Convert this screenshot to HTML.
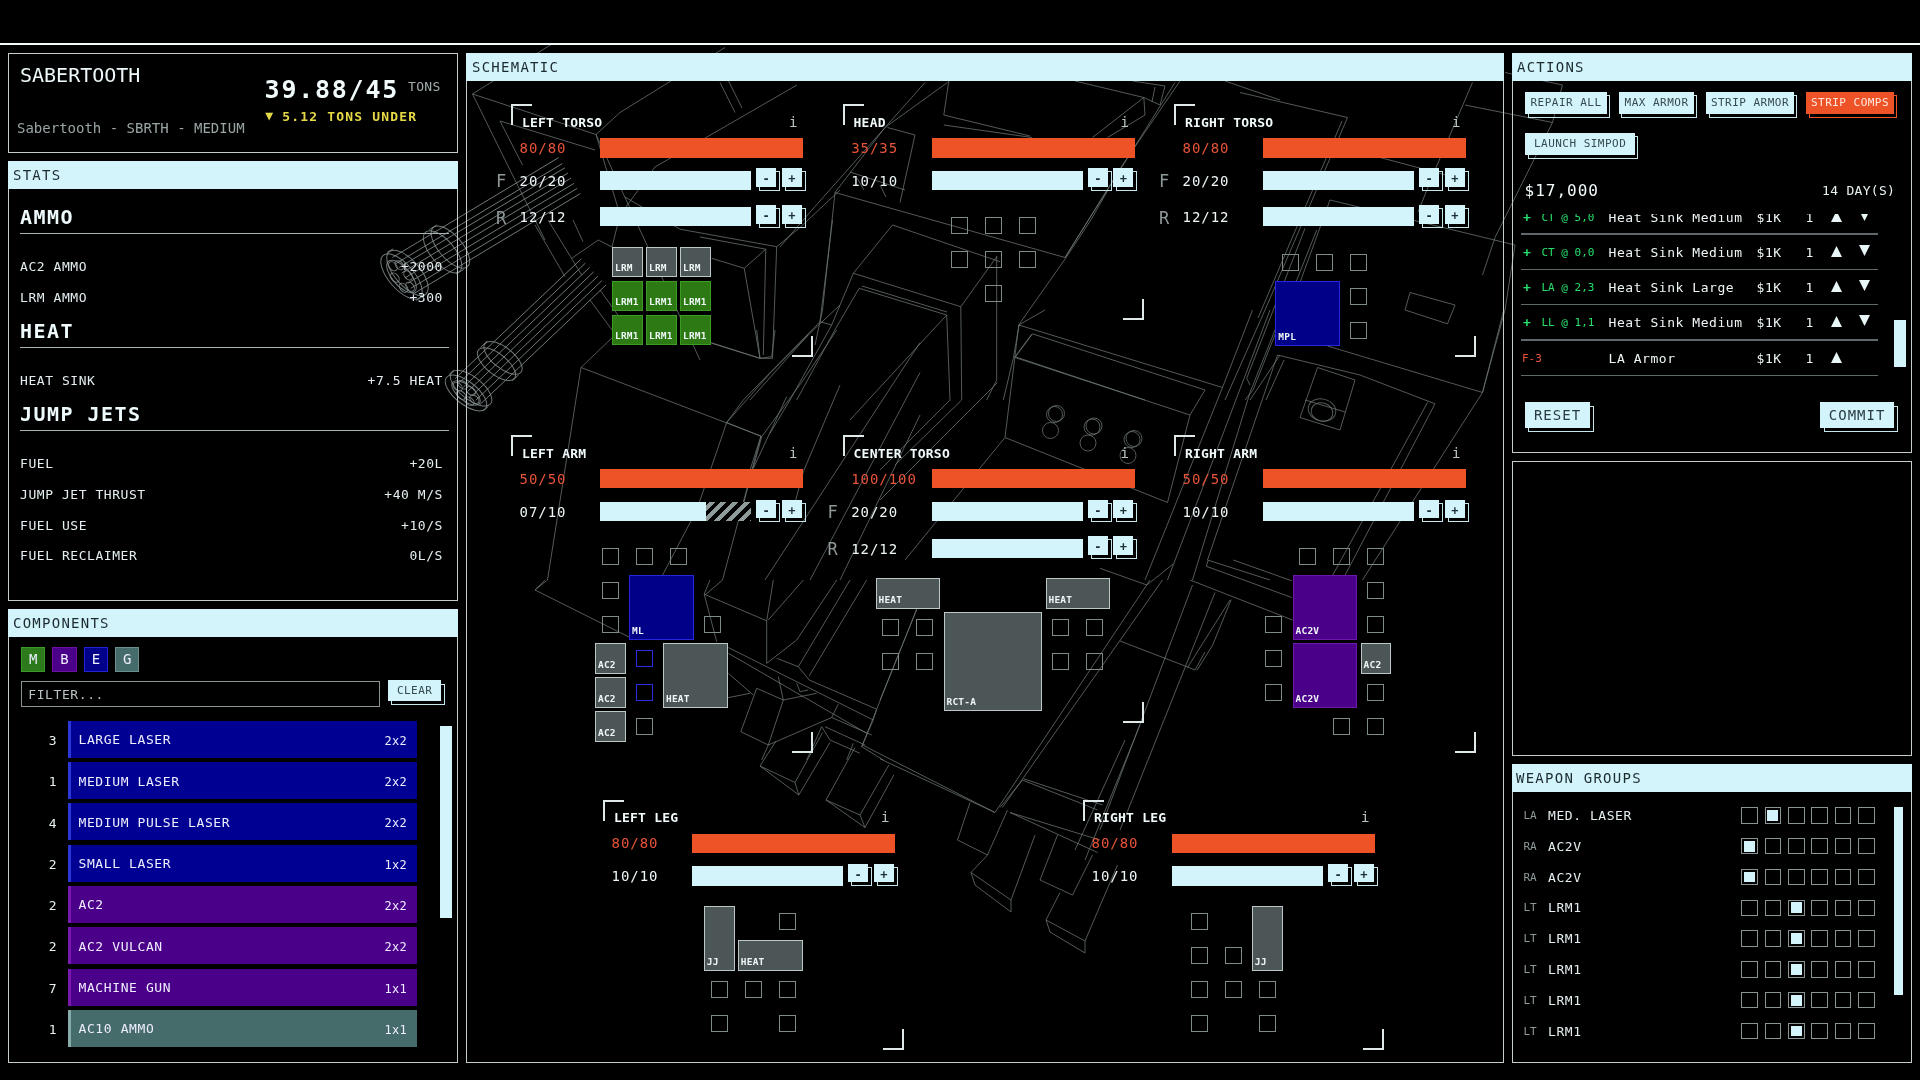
<!DOCTYPE html><html><head><meta charset="utf-8"><title>Sabertooth</title><style>
*{box-sizing:border-box;margin:0;padding:0}
html,body{width:1920px;height:1080px;background:#000;overflow:hidden}
body{position:relative;will-change:transform;font-family:"DejaVu Sans Mono","Liberation Mono",monospace;color:#e8f4f6;font-size:13px}
.a{position:absolute;white-space:pre;line-height:1}
.pn{position:absolute;border:1px solid #c4cccd}
.hd{position:absolute;background:#d2f4fa;color:#1c2b30;font-size:14px;letter-spacing:1.25px;height:28px;line-height:28px;white-space:pre}
.h2{position:absolute;font-weight:bold;font-size:20px;letter-spacing:1.45px;white-space:pre;line-height:1;color:#eefafc}
.ul{position:absolute;height:1px;background:#aab4b6}
.st{position:absolute;font-size:13px;letter-spacing:.55px;white-space:pre;line-height:1;color:#e4eef0}
.r{text-align:right}
.btn{position:absolute;background:#d2f4fa;color:#364a50;font-size:11px;letter-spacing:.48px;text-align:center;white-space:pre}
.btn.red{background:#ee5327;color:#ffe9df}
.sh{position:absolute;border:1.5px solid #c4e6ec}
.bar{position:absolute;height:19.2px}
.cy{background:#d2f4fa}
.rd{background:#ee5327}
.br{position:absolute;width:21px;height:21px}
.tl{border-left:2px solid #dfe9ea;border-top:2px solid #dfe9ea}
.brc{border-right:2px solid #dfe9ea;border-bottom:2px solid #dfe9ea}
.ti{position:absolute;font-weight:bold;font-size:13px;letter-spacing:.2px;white-space:pre;line-height:1;color:#f2fbfc}
.hp{position:absolute;font-size:14px;letter-spacing:.95px;white-space:pre;line-height:1}
.fr{position:absolute;font-size:17px;color:#8f9899;line-height:1}
.e{position:absolute;width:17px;height:17px;border:1.7px solid #7f8a8b}
.eb{border-color:#2a2ee0}
.it{position:absolute;font-size:9.5px;font-weight:bold;letter-spacing:.2px;line-height:1;color:#eef6f6;white-space:pre}
.it span{position:absolute;left:2px;bottom:3.5px}
.g{background:#4d5657;border:1.7px solid #bcc7c7}
.gr{background:#2d7a15;border:1.5px solid #3c9c24}
.bl{background:#000088;border:1.5px solid #2626dc}
.pu{background:#4b0089;border:1.5px solid #6d18ac}
.row{position:absolute;left:68px;width:349px;height:37px;border-left:3px solid}
.row .n{position:absolute;left:7.5px;top:12.5px;font-size:13px;letter-spacing:.6px;line-height:1;white-space:pre;color:#eef}
.row .z{position:absolute;right:10px;top:14px;font-size:12px;letter-spacing:.3px;line-height:1;color:#eef}
.cnt{position:absolute;width:20px;text-align:center;font-size:13px;line-height:1;color:#e8f0f0}
.cb{position:absolute;width:16.5px;height:16.5px;border:1.6px solid #899495}
.cb.on::after{content:"";position:absolute;left:1.9px;top:1.9px;right:1.9px;bottom:1.9px;background:#d2f4fa}
.sep{position:absolute;left:1521px;width:357px;height:1px;background:#5a6263}
.gn{color:#27e06c}
</style></head><body>
<svg class="a" style="left:0;top:0" width="1920" height="1080" viewBox="0 0 1920 1080" fill="none" stroke-width="1"><g stroke="#6f7777" stroke-opacity=".75"><path d="M563 37L472.5 94L596 134.5L620 215L612 247M472.5 94L510 170L545 240M500 121L595 150M500 121L522.5 165M725 47.5L620 112.5L596 134.5M797 85L655 167L620 215M720 82.5L735 112.5M728 80L742 108M596 134.5L640 230L700 360M571.7 258.3L598.3 240L612 247M535 225L565 276.7M548 220L581.7 275M573 220L583 241.7M590 300L612 330L640 322M600 290L625 325M948.8 81L943.8 115L1030 136M943.8 125L1032 137.5M1075 81L1143.8 97.5L1092.5 137.5M1143.8 97.5L1145 115L1107.5 137.5M1132.5 81L1165 86L1160 105L1143.8 97.5M1155 87L1152 102M835 192.5L1065 257.5L1175 82.5M1108 190L1090.8 220M925 82.5L807.5 215L780 247M947.5 82.5L885 127.5L835 192.5L822.5 310L815 345M887.5 127.5L915 135L900 202.5M850 172L905 190M857 178L864 190M880 185L886 197M1225 81L1280 100M1180 81L1122.5 165L1065 257.5M1240 92.5L1347.5 117.5L1265 310L1225 400M1342 121L1258 318M1472.5 82.5L1435 170L1418 212M1465 105L1552.5 122.5L1495 237.5L1482.5 275M1505 72.5L1562.5 85L1552.5 122.5M1330 200L1515 245L1505 310L1482.5 392.5M1330 200L1290 310M1380 157.5L1465 180M1410 292.5L1455 305L1447.5 323.8L1405 310L1410 292.5M615 335L581 367.5L761 436L750 470M581 367.5L547.5 580L535 590M761 436L722.5 580L705 595M920 342.5L765 580M920 372.5L810 580M920 415L840 580M1045 310L1018.8 325L1222.5 387.5M1018.8 325L1005 437.5L1167.5 502.5L1190 415L1205 390L1032.5 333.8L1015 357.5L1190 415M997.5 382.5L880 500M1005 437.5L905 560M1252.5 310L1222.5 387.5L1145 580M1270 310L1187.5 527.5L1167.5 580M1280 317.5L1250 392.5L1192.5 580M1277.5 355L1360 375L1435 403.8L1342.5 580M1277.5 355L1207.5 560L1270 580M1427.5 402.5L1330 580M1317.5 367.5L1355 380L1340 430L1300 417.5L1317.5 367.5M1305 400L1345 412M1327.5 346L1482.5 392.5L1503.8 310M1482.5 392.5L1362.5 580M760 766L798.8 795L830 742.5M760 766L776 741M760 766L795 782.5L798.8 795M795 782.5L822.5 732.5M826 800L865 827.5L893.8 775M826 800L855 747.5M826 800L860 815L865 827.5M860 815L888.8 765M1150 580L995 812.5M1162.5 580L1002.5 807.5M1192.5 585L1100 830M1215 592.5L1120 830M1230 600L1187.5 667.5M1120 641L1182.5 665L1195 670L1205 652M1023.8 778.8L1102.5 805M880 758.8L995 812.5M1010 812.5L1100 840M917.5 607.5L880 700M1190 580L1292.5 620M970 802.5L957.5 840L987.5 855L1007.5 810M987.5 855L971 872.5L1011 900L1035 835M971 872.5L975 885L1011 912L1011 900M1057.5 835L1040 880L1072.5 895L1092.5 855M1060 892.5L1046 920L1085 941L1117.5 865M1046 920L1050 932L1085 953L1085 941M1010 812.5L1097.5 852.5M1022.5 780L1097.5 810M1022.5 780L1000 807.5M1140 725L1085 860M1125 740L1075 850M625 197L680 229.2L776.7 246.7L800 227.5L840 190M776.7 246.7L772.5 358.3L760 358.3M765.8 249.2L763.3 355M711.7 258.3L744.2 268.3L765.8 249.2M744.2 268.3L760 358.3L710.8 342.5M700 237L765.8 249.2M832.5 220L820 321.7L831.7 325M820 321.7L743.3 400L726.7 422.5M808 335L750 400M853.3 273.3L831.7 325L790 400L770 433.3M859.2 288.3L836.7 326.7L796.7 400M892.5 225L853.3 273.3L960.8 306.7L996.7 256.7M892.5 225L1000 261.7M960.8 306.7L961.7 400L895 465M996.7 255.8L996.7 380L986.7 400M859.2 288.3L946.7 315L950 400L880 470M946.7 315L868.3 400L850 420M862 286L947 312M726.7 422.5L761.7 436.7M726.7 422.5L696.7 510L660 580L640 640M726.7 422.5L770 373.3L813.3 330L840 305M836.7 330L803.3 380L761.7 436.7L741.7 510M786.7 396.7L753.3 468.3M840 385L803.3 471.7L793 510M711.7 343.3L760 358.3L771.7 356.7L775 330M760 358.3L756.7 330M1090.8 220L1065.8 258L1019.2 324.2L1013.3 358.3L1003.3 400M1031.7 334.2L1015 356.7L1145 400M1305 228.3L1246.7 378.3L1250 385M1316.7 230L1253 390L1245 400M1280 355L1250 400M1284 360L1266 400M545 580L535 590L629 637M710 580L704.2 594.2L766.7 620.8L766.7 663.3M766.7 620.8L773.3 580M768.3 620L803.3 580M704.2 594.2L716.7 641.7M766.7 663.3L796.7 640L836.7 580M798.3 666.7L850 580M809.2 675.8L866.7 580M776.7 658.3L798.3 666.7L809.2 680L876.7 709.2L873.3 720L861.7 746.7L883.3 760M728.3 647.5L873.3 720M728.3 653.3L866.7 733.3M916.7 609.2L861.7 746.7M756.7 688.3L740.8 731.7L768.3 745L783.3 700L756.7 688.3M778.3 676.7L783.3 700L816.7 693.3M768.3 745L831.7 717.5L838.3 704.2M796.7 683.3L800 691.7L808.3 690M831.7 717.5L871.7 735M825 726.7L865 745M821.7 726.7L830 740L860 753.3M768.3 745L761.7 760M821.7 726.7L806.7 760M853.3 743.3L846.7 760M728.3 673.3L753.3 695M700 703.3L750 693.3M862.5 745L995 812.5M1208.3 560L1206.3 566.3L1291.7 597.5M1233.3 560L1291.7 580.8M1100 568.3L1146.9 585L1172.9 564.2M1231.2 599.6L1212.5 645.4L1196.9 670.4"/><ellipse cx="1322" cy="412" rx="11" ry="9" transform="rotate(15 1322 412)"/><ellipse cx="1322" cy="410" rx="14" ry="11" transform="rotate(15 1322 410)"/><ellipse cx="1054.5" cy="414.5" rx="8" ry="8" transform="rotate(0 1054.5 414.5)"/><ellipse cx="1050.5" cy="430.5" rx="8" ry="8" transform="rotate(0 1050.5 430.5)"/><ellipse cx="1056.5" cy="413.5" rx="8" ry="8" transform="rotate(0 1056.5 413.5)"/><ellipse cx="1092" cy="427" rx="8" ry="8" transform="rotate(0 1092 427)"/><ellipse cx="1088" cy="443" rx="8" ry="8" transform="rotate(0 1088 443)"/><ellipse cx="1094" cy="426" rx="8" ry="8" transform="rotate(0 1094 426)"/><ellipse cx="1132" cy="439.5" rx="8" ry="8" transform="rotate(0 1132 439.5)"/><ellipse cx="1128" cy="455.5" rx="8" ry="8" transform="rotate(0 1128 455.5)"/><ellipse cx="1134" cy="438.5" rx="8" ry="8" transform="rotate(0 1134 438.5)"/></g><g stroke="#8c9696" stroke-opacity=".8"><path d="M392.4 257.5L558.7 157.6M396 263.5L562.3 163.6M398.6 267.8L564.9 167.8M401.7 272.9L568 173M404.8 278L571 178.1M407.8 283.2L574.1 183.3M410.9 288.3L577.2 188.4M414 293.5L580.3 193.6M387.1 252.5L393.1 248.9M415.9 300.5L421.9 296.9M429.3 229.5L437 224.9M456 274.1L463.7 269.4M455.1 378.6L581.3 258.8M459.2 382.9L585.4 263.1M463.3 387.3L589.5 267.5M467.5 391.6L593.7 271.8M471.6 396L597.8 276.2M475.7 400.3L601.9 280.6M479.8 404.7L606.1 284.9M448.8 374.9L453.9 370M483.2 411.1L488.3 406.3M480.6 347.4L487.2 341.2M512.3 380.8L518.8 374.6"/><ellipse cx="401.5" cy="276.5" rx="28" ry="12.6" transform="rotate(49 401.5 276.5)"/><ellipse cx="407.5" cy="272.9" rx="28" ry="12.6" transform="rotate(49 407.5 272.9)"/><ellipse cx="401.5" cy="276.5" rx="20" ry="9" transform="rotate(49 401.5 276.5)"/><ellipse cx="410.1" cy="286.7" rx="5.2" ry="3.5" transform="rotate(49 410.1 286.7)"/><ellipse cx="408.1" cy="275.4" rx="5.2" ry="3.5" transform="rotate(49 408.1 275.4)"/><ellipse cx="399.4" cy="265.2" rx="5.2" ry="3.5" transform="rotate(49 399.4 265.2)"/><ellipse cx="392.9" cy="266.3" rx="5.2" ry="3.5" transform="rotate(49 392.9 266.3)"/><ellipse cx="394.9" cy="277.6" rx="5.2" ry="3.5" transform="rotate(49 394.9 277.6)"/><ellipse cx="403.6" cy="287.8" rx="5.2" ry="3.5" transform="rotate(49 403.6 287.8)"/><ellipse cx="442.6" cy="251.8" rx="26" ry="11.7" transform="rotate(49 442.6 251.8)"/><ellipse cx="450.4" cy="247.1" rx="26" ry="11.7" transform="rotate(49 450.4 247.1)"/><ellipse cx="466" cy="393" rx="25" ry="11.2" transform="rotate(38.5 466 393)"/><ellipse cx="471.1" cy="388.2" rx="25" ry="11.2" transform="rotate(38.5 471.1 388.2)"/><ellipse cx="466" cy="393" rx="17" ry="7.7" transform="rotate(38.5 466 393)"/><ellipse cx="474.3" cy="399.3" rx="5.2" ry="3.5" transform="rotate(38.5 474.3 399.3)"/><ellipse cx="470.9" cy="391" rx="5.2" ry="3.5" transform="rotate(38.5 470.9 391)"/><ellipse cx="462.5" cy="384.7" rx="5.2" ry="3.5" transform="rotate(38.5 462.5 384.7)"/><ellipse cx="457.7" cy="386.7" rx="5.2" ry="3.5" transform="rotate(38.5 457.7 386.7)"/><ellipse cx="461.1" cy="395" rx="5.2" ry="3.5" transform="rotate(38.5 461.1 395)"/><ellipse cx="469.5" cy="401.3" rx="5.2" ry="3.5" transform="rotate(38.5 469.5 401.3)"/><ellipse cx="496.5" cy="364.1" rx="23" ry="10.3" transform="rotate(38.5 496.5 364.1)"/><ellipse cx="503" cy="357.9" rx="23" ry="10.3" transform="rotate(38.5 503 357.9)"/></g></svg>
<div class="a" style="left:0;top:0;width:1920px;height:43px;background:#000"></div>
<div class="a" style="left:0;top:43px;width:1920px;height:2px;background:#f4fbfc"></div>
<div class="pn" style="left:8px;top:53px;width:450px;height:100px"></div>
<div class="a" style="left:20px;top:65px;font-size:20px;letter-spacing:0px;color:#eef9fb">SABERTOOTH</div>
<div class="a" style="left:17px;top:121px;font-size:14px;color:#9aa5a6">Sabertooth - SBRTH - MEDIUM</div>
<div class="a" style="left:264.6px;top:77.2px;font-size:25px;font-weight:bold;letter-spacing:1.75px;color:#f2fbfc">39.88/45</div>
<div class="a" style="left:408px;top:80px;font-size:13px;letter-spacing:.3px;color:#a3adae">TONS</div>
<div class="a" style="left:265.3px;top:109.8px;font-size:13px;font-weight:bold;letter-spacing:1.18px;color:#e6d946"><span style="font-size:13px;position:relative;top:-1px;letter-spacing:0">▼</span> 5.12 TONS UNDER</div>
<div class="pn" style="left:8px;top:161px;width:450px;height:440px"></div>
<div class="hd" style="left:8px;top:161px;width:450px;padding-left:5px">STATS</div>
<div class="h2" style="left:20px;top:207px">AMMO</div>
<div class="ul" style="left:20px;top:233px;width:429px"></div>
<div class="st" style="left:20px;top:259.5px">AC2 AMMO</div>
<div class="st r" style="right:1477px;top:259.5px">+2000</div>
<div class="st" style="left:20px;top:290.5px">LRM AMMO</div>
<div class="st r" style="right:1477px;top:290.5px">+300</div>
<div class="h2" style="left:20px;top:321px">HEAT</div>
<div class="ul" style="left:20px;top:347px;width:429px"></div>
<div class="st" style="left:20px;top:373.5px">HEAT SINK</div>
<div class="st r" style="right:1477px;top:373.5px">+7.5 HEAT</div>
<div class="h2" style="left:20px;top:404px">JUMP JETS</div>
<div class="ul" style="left:20px;top:430px;width:429px"></div>
<div class="st" style="left:20px;top:457px">FUEL</div>
<div class="st r" style="right:1477px;top:457px">+20L</div>
<div class="st" style="left:20px;top:488px">JUMP JET THRUST</div>
<div class="st r" style="right:1477px;top:488px">+40 M/S</div>
<div class="st" style="left:20px;top:518.5px">FUEL USE</div>
<div class="st r" style="right:1477px;top:518.5px">+10/S</div>
<div class="st" style="left:20px;top:549px">FUEL RECLAIMER</div>
<div class="st r" style="right:1477px;top:549px">0L/S</div>
<div class="pn" style="left:8px;top:609px;width:450px;height:454px"></div>
<div class="hd" style="left:8px;top:609px;width:450px;padding-left:5px">COMPONENTS</div>
<div class="a" style="left:21px;top:647.2px;width:24.2px;height:24.4px;background:#2c7a1c;border:1.5px solid #3a9a27;text-align:center;line-height:23.5px;font-size:14px;color:#eef">M</div>
<div class="a" style="left:52.4px;top:647.2px;width:24.2px;height:24.4px;background:#4b0089;border:1.5px solid #6c11a6;text-align:center;line-height:23.5px;font-size:14px;color:#eef">B</div>
<div class="a" style="left:83.8px;top:647.2px;width:24.2px;height:24.4px;background:#000088;border:1.5px solid #2323d8;text-align:center;line-height:23.5px;font-size:14px;color:#eef">E</div>
<div class="a" style="left:115.2px;top:647.2px;width:24.2px;height:24.4px;background:#456b6b;border:1.5px solid #6b8f8f;text-align:center;line-height:23.5px;font-size:14px;color:#eef">G</div>
<div class="a" style="left:21px;top:681px;width:359px;height:26px;border:1px solid #8a9495;padding-left:6.3px;line-height:25px;font-size:13px;letter-spacing:.58px;color:#b9c3c4">FILTER...</div>
<div class="sh" style="left:391px;top:683.5px;width:53.9px;height:21.9px"></div>
<div class="btn" style="left:388px;top:680px;width:53.3px;height:21.3px;line-height:21.3px;">CLEAR</div>
<div class="cnt" style="left:42.7px;top:733.9px">3</div>
<div class="row" style="top:720.7px;background:#000092;border-color:#2a38d8"><div class="n">LARGE LASER</div><div class="z">2x2</div></div>
<div class="cnt" style="left:42.7px;top:775.2px">1</div>
<div class="row" style="top:762px;background:#000092;border-color:#2a38d8"><div class="n">MEDIUM LASER</div><div class="z">2x2</div></div>
<div class="cnt" style="left:42.7px;top:816.5px">4</div>
<div class="row" style="top:803.3px;background:#000092;border-color:#2a38d8"><div class="n">MEDIUM PULSE LASER</div><div class="z">2x2</div></div>
<div class="cnt" style="left:42.7px;top:857.8px">2</div>
<div class="row" style="top:844.6px;background:#000092;border-color:#2a38d8"><div class="n">SMALL LASER</div><div class="z">1x2</div></div>
<div class="cnt" style="left:42.7px;top:899.1px">2</div>
<div class="row" style="top:885.9px;background:#4b0089;border-color:#7a19b0"><div class="n">AC2</div><div class="z">2x2</div></div>
<div class="cnt" style="left:42.7px;top:940.4px">2</div>
<div class="row" style="top:927.2px;background:#4b0089;border-color:#7a19b0"><div class="n">AC2 VULCAN</div><div class="z">2x2</div></div>
<div class="cnt" style="left:42.7px;top:981.7px">7</div>
<div class="row" style="top:968.5px;background:#4b0089;border-color:#7a19b0"><div class="n">MACHINE GUN</div><div class="z">1x1</div></div>
<div class="cnt" style="left:42.7px;top:1023px">1</div>
<div class="row" style="top:1009.8px;background:#456b6b;border-color:#86abab"><div class="n">AC10 AMMO</div><div class="z">1x1</div></div>
<div class="a cy" style="left:440px;top:726px;width:12px;height:192px"></div>
<div class="pn" style="left:466px;top:53px;width:1037.8px;height:1010px"></div>
<div class="hd" style="left:466px;top:53px;width:1037.8px;padding-left:6px">SCHEMATIC</div>
<div class="br tl" style="left:511px;top:104px"></div>
<div class="br brc" style="left:792px;top:335.7px"></div>
<div class="ti" style="left:522px;top:115.6px">LEFT TORSO</div>
<div class="a" style="left:789px;top:114.5px;font-size:14px;color:#b9c3c4">i</div>
<div class="hp" style="left:519.6px;top:140.5px;color:#e8543a">80/80</div>
<div class="bar rd" style="left:600px;top:138px;width:203px;height:19.5px"></div>
<div class="hp" style="left:519.6px;top:173.5px;color:#eef6f7">20/20</div>
<div class="bar cy" style="left:600px;top:170.7px;width:151px"></div>
<div class="sh" style="left:759.1px;top:171.2px;width:21px;height:19.5px"></div>
<div class="a" style="left:756.1px;top:168.2px;width:20.2px;height:18.5px;background:#d2f4fa;color:#1d2f35;font-size:12px;font-weight:bold;text-align:center;line-height:22px;overflow:hidden">-</div>
<div class="sh" style="left:784.7px;top:171.2px;width:21px;height:19.5px"></div>
<div class="a" style="left:781.7px;top:168.2px;width:20.2px;height:18.5px;background:#d2f4fa;color:#1d2f35;font-size:12px;font-weight:bold;text-align:center;line-height:22px;overflow:hidden">+</div>
<div class="fr" style="left:496px;top:173px">F</div>
<div class="fr" style="left:496px;top:210px">R</div>
<div class="hp" style="left:519.6px;top:210.2px;color:#eef6f7">12/12</div>
<div class="bar cy" style="left:600px;top:207.3px;width:151px"></div>
<div class="sh" style="left:759.1px;top:208px;width:21px;height:19.5px"></div>
<div class="a" style="left:756.1px;top:205px;width:20.2px;height:18.5px;background:#d2f4fa;color:#1d2f35;font-size:12px;font-weight:bold;text-align:center;line-height:22px;overflow:hidden">-</div>
<div class="sh" style="left:784.7px;top:208px;width:21px;height:19.5px"></div>
<div class="a" style="left:781.7px;top:205px;width:20.2px;height:18.5px;background:#d2f4fa;color:#1d2f35;font-size:12px;font-weight:bold;text-align:center;line-height:22px;overflow:hidden">+</div>
<div class="it g" style="left:612px;top:246.5px;width:30.9px;height:30.9px"><span>LRM</span></div>
<div class="it g" style="left:646px;top:246.5px;width:30.9px;height:30.9px"><span>LRM</span></div>
<div class="it g" style="left:680px;top:246.5px;width:30.9px;height:30.9px"><span>LRM</span></div>
<div class="it gr" style="left:612px;top:280.5px;width:30.9px;height:30.9px"><span>LRM1</span></div>
<div class="it gr" style="left:646px;top:280.5px;width:30.9px;height:30.9px"><span>LRM1</span></div>
<div class="it gr" style="left:680px;top:280.5px;width:30.9px;height:30.9px"><span>LRM1</span></div>
<div class="it gr" style="left:612px;top:314.5px;width:30.9px;height:30.9px"><span>LRM1</span></div>
<div class="it gr" style="left:646px;top:314.5px;width:30.9px;height:30.9px"><span>LRM1</span></div>
<div class="it gr" style="left:680px;top:314.5px;width:30.9px;height:30.9px"><span>LRM1</span></div>
<div class="br tl" style="left:842.6px;top:104px"></div>
<div class="br brc" style="left:1123px;top:298.7px"></div>
<div class="ti" style="left:853.6px;top:115.6px">HEAD</div>
<div class="a" style="left:1120.6px;top:114.5px;font-size:14px;color:#b9c3c4">i</div>
<div class="hp" style="left:851.2px;top:140.5px;color:#e8543a">35/35</div>
<div class="bar rd" style="left:931.6px;top:138px;width:203px;height:19.5px"></div>
<div class="hp" style="left:851.2px;top:173.5px;color:#eef6f7">10/10</div>
<div class="bar cy" style="left:931.6px;top:170.7px;width:151px"></div>
<div class="sh" style="left:1090.7px;top:171.2px;width:21px;height:19.5px"></div>
<div class="a" style="left:1087.7px;top:168.2px;width:20.2px;height:18.5px;background:#d2f4fa;color:#1d2f35;font-size:12px;font-weight:bold;text-align:center;line-height:22px;overflow:hidden">-</div>
<div class="sh" style="left:1116.3px;top:171.2px;width:21px;height:19.5px"></div>
<div class="a" style="left:1113.3px;top:168.2px;width:20.2px;height:18.5px;background:#d2f4fa;color:#1d2f35;font-size:12px;font-weight:bold;text-align:center;line-height:22px;overflow:hidden">+</div>
<div class="e " style="left:950.9px;top:217.3px"></div>
<div class="e " style="left:984.9px;top:217.3px"></div>
<div class="e " style="left:1018.9px;top:217.3px"></div>
<div class="e " style="left:950.9px;top:251.3px"></div>
<div class="e " style="left:984.9px;top:251.3px"></div>
<div class="e " style="left:1018.9px;top:251.3px"></div>
<div class="e " style="left:984.9px;top:285.3px"></div>
<div class="br tl" style="left:1174px;top:104px"></div>
<div class="br brc" style="left:1455px;top:335.7px"></div>
<div class="ti" style="left:1185px;top:115.6px">RIGHT TORSO</div>
<div class="a" style="left:1452px;top:114.5px;font-size:14px;color:#b9c3c4">i</div>
<div class="hp" style="left:1182.6px;top:140.5px;color:#e8543a">80/80</div>
<div class="bar rd" style="left:1263px;top:138px;width:203px;height:19.5px"></div>
<div class="hp" style="left:1182.6px;top:173.5px;color:#eef6f7">20/20</div>
<div class="bar cy" style="left:1263px;top:170.7px;width:151px"></div>
<div class="sh" style="left:1422.1px;top:171.2px;width:21px;height:19.5px"></div>
<div class="a" style="left:1419.1px;top:168.2px;width:20.2px;height:18.5px;background:#d2f4fa;color:#1d2f35;font-size:12px;font-weight:bold;text-align:center;line-height:22px;overflow:hidden">-</div>
<div class="sh" style="left:1447.7px;top:171.2px;width:21px;height:19.5px"></div>
<div class="a" style="left:1444.7px;top:168.2px;width:20.2px;height:18.5px;background:#d2f4fa;color:#1d2f35;font-size:12px;font-weight:bold;text-align:center;line-height:22px;overflow:hidden">+</div>
<div class="fr" style="left:1159px;top:173px">F</div>
<div class="fr" style="left:1159px;top:210px">R</div>
<div class="hp" style="left:1182.6px;top:210.2px;color:#eef6f7">12/12</div>
<div class="bar cy" style="left:1263px;top:207.3px;width:151px"></div>
<div class="sh" style="left:1422.1px;top:208px;width:21px;height:19.5px"></div>
<div class="a" style="left:1419.1px;top:205px;width:20.2px;height:18.5px;background:#d2f4fa;color:#1d2f35;font-size:12px;font-weight:bold;text-align:center;line-height:22px;overflow:hidden">-</div>
<div class="sh" style="left:1447.7px;top:208px;width:21px;height:19.5px"></div>
<div class="a" style="left:1444.7px;top:205px;width:20.2px;height:18.5px;background:#d2f4fa;color:#1d2f35;font-size:12px;font-weight:bold;text-align:center;line-height:22px;overflow:hidden">+</div>
<div class="e " style="left:1282.1px;top:253.8px"></div>
<div class="e " style="left:1316.1px;top:253.8px"></div>
<div class="e " style="left:1350.1px;top:253.8px"></div>
<div class="it bl" style="left:1275.3px;top:281px;width:64.9px;height:64.9px"><span>MPL</span></div>
<div class="e " style="left:1350.1px;top:287.8px"></div>
<div class="e " style="left:1350.1px;top:321.8px"></div>
<div class="br tl" style="left:511px;top:435.4px"></div>
<div class="br brc" style="left:792px;top:731.7px"></div>
<div class="ti" style="left:522px;top:447px">LEFT ARM</div>
<div class="a" style="left:789px;top:445.9px;font-size:14px;color:#b9c3c4">i</div>
<div class="hp" style="left:519.6px;top:471.9px;color:#e8543a">50/50</div>
<div class="bar rd" style="left:600px;top:469.4px;width:203px;height:18.3px"></div>
<div class="hp" style="left:519.6px;top:504.9px;color:#eef6f7">07/10</div>
<div class="bar cy" style="left:600px;top:502.1px;width:106px"></div>
<div class="bar" style="left:706px;top:502.1px;width:45px;background:repeating-linear-gradient(135deg,#000 0 2.2px,#8f9b9b 2.2px 6.4px,#000 6.4px 8.4px)"></div>
<div class="sh" style="left:759.1px;top:502.6px;width:21px;height:19.5px"></div>
<div class="a" style="left:756.1px;top:499.6px;width:20.2px;height:18.5px;background:#d2f4fa;color:#1d2f35;font-size:12px;font-weight:bold;text-align:center;line-height:22px;overflow:hidden">-</div>
<div class="sh" style="left:784.7px;top:502.6px;width:21px;height:19.5px"></div>
<div class="a" style="left:781.7px;top:499.6px;width:20.2px;height:18.5px;background:#d2f4fa;color:#1d2f35;font-size:12px;font-weight:bold;text-align:center;line-height:22px;overflow:hidden">+</div>
<div class="e " style="left:601.8px;top:548.1px"></div>
<div class="e " style="left:635.8px;top:548.1px"></div>
<div class="e " style="left:669.8px;top:548.1px"></div>
<div class="e " style="left:601.8px;top:582.1px"></div>
<div class="it bl" style="left:629px;top:575.3px;width:64.9px;height:64.9px"><span>ML</span></div>
<div class="e " style="left:601.8px;top:616.1px"></div>
<div class="e " style="left:703.8px;top:616.1px"></div>
<div class="it g" style="left:595px;top:643.3px;width:30.9px;height:30.9px"><span>AC2</span></div>
<div class="it g" style="left:595px;top:677.3px;width:30.9px;height:30.9px"><span>AC2</span></div>
<div class="it g" style="left:595px;top:711.3px;width:30.9px;height:30.9px"><span>AC2</span></div>
<div class="e eb" style="left:635.8px;top:650.1px"></div>
<div class="e eb" style="left:635.8px;top:684.1px"></div>
<div class="e " style="left:635.8px;top:718.1px"></div>
<div class="it g" style="left:663px;top:643.3px;width:64.9px;height:64.9px"><span>HEAT</span></div>
<div class="br tl" style="left:842.6px;top:435.4px"></div>
<div class="br brc" style="left:1123px;top:701.7px"></div>
<div class="ti" style="left:853.6px;top:447px">CENTER TORSO</div>
<div class="a" style="left:1120.6px;top:445.9px;font-size:14px;color:#b9c3c4">i</div>
<div class="hp" style="left:851.2px;top:471.9px;color:#e8543a">100/100</div>
<div class="bar rd" style="left:931.6px;top:469.4px;width:203px;height:18.3px"></div>
<div class="hp" style="left:851.2px;top:504.9px;color:#eef6f7">20/20</div>
<div class="bar cy" style="left:931.6px;top:502.1px;width:151px"></div>
<div class="sh" style="left:1090.7px;top:502.6px;width:21px;height:19.5px"></div>
<div class="a" style="left:1087.7px;top:499.6px;width:20.2px;height:18.5px;background:#d2f4fa;color:#1d2f35;font-size:12px;font-weight:bold;text-align:center;line-height:22px;overflow:hidden">-</div>
<div class="sh" style="left:1116.3px;top:502.6px;width:21px;height:19.5px"></div>
<div class="a" style="left:1113.3px;top:499.6px;width:20.2px;height:18.5px;background:#d2f4fa;color:#1d2f35;font-size:12px;font-weight:bold;text-align:center;line-height:22px;overflow:hidden">+</div>
<div class="fr" style="left:827.6px;top:504.4px">F</div>
<div class="fr" style="left:827.6px;top:541.4px">R</div>
<div class="hp" style="left:851.2px;top:541.6px;color:#eef6f7">12/12</div>
<div class="bar cy" style="left:931.6px;top:538.7px;width:151px"></div>
<div class="sh" style="left:1090.7px;top:539.4px;width:21px;height:19.5px"></div>
<div class="a" style="left:1087.7px;top:536.4px;width:20.2px;height:18.5px;background:#d2f4fa;color:#1d2f35;font-size:12px;font-weight:bold;text-align:center;line-height:22px;overflow:hidden">-</div>
<div class="sh" style="left:1116.3px;top:539.4px;width:21px;height:19.5px"></div>
<div class="a" style="left:1113.3px;top:536.4px;width:20.2px;height:18.5px;background:#d2f4fa;color:#1d2f35;font-size:12px;font-weight:bold;text-align:center;line-height:22px;overflow:hidden">+</div>
<div class="it g" style="left:875.5px;top:578.3px;width:64.9px;height:30.9px"><span>HEAT</span></div>
<div class="it g" style="left:1045.5px;top:578.3px;width:64.9px;height:30.9px"><span>HEAT</span></div>
<div class="it g" style="left:943.5px;top:612.3px;width:98.9px;height:98.9px"><span>RCT-A</span></div>
<div class="e " style="left:882.3px;top:619.1px"></div>
<div class="e " style="left:916.3px;top:619.1px"></div>
<div class="e " style="left:882.3px;top:653.1px"></div>
<div class="e " style="left:916.3px;top:653.1px"></div>
<div class="e " style="left:1052.3px;top:619.1px"></div>
<div class="e " style="left:1086.3px;top:619.1px"></div>
<div class="e " style="left:1052.3px;top:653.1px"></div>
<div class="e " style="left:1086.3px;top:653.1px"></div>
<div class="br tl" style="left:1174px;top:435.4px"></div>
<div class="br brc" style="left:1455px;top:731.7px"></div>
<div class="ti" style="left:1185px;top:447px">RIGHT ARM</div>
<div class="a" style="left:1452px;top:445.9px;font-size:14px;color:#b9c3c4">i</div>
<div class="hp" style="left:1182.6px;top:471.9px;color:#e8543a">50/50</div>
<div class="bar rd" style="left:1263px;top:469.4px;width:203px;height:18.3px"></div>
<div class="hp" style="left:1182.6px;top:504.9px;color:#eef6f7">10/10</div>
<div class="bar cy" style="left:1263px;top:502.1px;width:151px"></div>
<div class="sh" style="left:1422.1px;top:502.6px;width:21px;height:19.5px"></div>
<div class="a" style="left:1419.1px;top:499.6px;width:20.2px;height:18.5px;background:#d2f4fa;color:#1d2f35;font-size:12px;font-weight:bold;text-align:center;line-height:22px;overflow:hidden">-</div>
<div class="sh" style="left:1447.7px;top:502.6px;width:21px;height:19.5px"></div>
<div class="a" style="left:1444.7px;top:499.6px;width:20.2px;height:18.5px;background:#d2f4fa;color:#1d2f35;font-size:12px;font-weight:bold;text-align:center;line-height:22px;overflow:hidden">+</div>
<div class="e " style="left:1299.4px;top:548.1px"></div>
<div class="e " style="left:1333.4px;top:548.1px"></div>
<div class="e " style="left:1367.4px;top:548.1px"></div>
<div class="it pu" style="left:1292.6px;top:575.3px;width:64.9px;height:64.9px"><span>AC2V</span></div>
<div class="e " style="left:1367.4px;top:582.1px"></div>
<div class="e " style="left:1265.4px;top:616.1px"></div>
<div class="e " style="left:1367.4px;top:616.1px"></div>
<div class="e " style="left:1265.4px;top:650.1px"></div>
<div class="it pu" style="left:1292.6px;top:643.3px;width:64.9px;height:64.9px"><span>AC2V</span></div>
<div class="it g" style="left:1360.6px;top:643.3px;width:30.9px;height:30.9px"><span>AC2</span></div>
<div class="e " style="left:1265.4px;top:684.1px"></div>
<div class="e " style="left:1367.4px;top:684.1px"></div>
<div class="e " style="left:1333.4px;top:718.1px"></div>
<div class="e " style="left:1367.4px;top:718.1px"></div>
<div class="br tl" style="left:603px;top:799.7px"></div>
<div class="br brc" style="left:883px;top:1028.7px"></div>
<div class="ti" style="left:614px;top:811.3px">LEFT LEG</div>
<div class="a" style="left:881px;top:810.2px;font-size:14px;color:#b9c3c4">i</div>
<div class="hp" style="left:611.6px;top:836.2px;color:#e8543a">80/80</div>
<div class="bar rd" style="left:692px;top:833.7px;width:203px;height:19.2px"></div>
<div class="hp" style="left:611.6px;top:869.2px;color:#eef6f7">10/10</div>
<div class="bar cy" style="left:692px;top:866.4px;width:151px"></div>
<div class="sh" style="left:851.1px;top:866.9px;width:21px;height:19.5px"></div>
<div class="a" style="left:848.1px;top:863.9px;width:20.2px;height:18.5px;background:#d2f4fa;color:#1d2f35;font-size:12px;font-weight:bold;text-align:center;line-height:22px;overflow:hidden">-</div>
<div class="sh" style="left:876.7px;top:866.9px;width:21px;height:19.5px"></div>
<div class="a" style="left:873.7px;top:863.9px;width:20.2px;height:18.5px;background:#d2f4fa;color:#1d2f35;font-size:12px;font-weight:bold;text-align:center;line-height:22px;overflow:hidden">+</div>
<div class="it g" style="left:703.8px;top:905.9px;width:30.9px;height:64.9px"><span>JJ</span></div>
<div class="e " style="left:778.6px;top:912.7px"></div>
<div class="it g" style="left:737.8px;top:939.9px;width:64.9px;height:30.9px"><span>HEAT</span></div>
<div class="e " style="left:710.6px;top:980.7px"></div>
<div class="e " style="left:744.6px;top:980.7px"></div>
<div class="e " style="left:778.6px;top:980.7px"></div>
<div class="e " style="left:710.6px;top:1014.7px"></div>
<div class="e " style="left:778.6px;top:1014.7px"></div>
<div class="br tl" style="left:1083px;top:799.7px"></div>
<div class="br brc" style="left:1363px;top:1028.7px"></div>
<div class="ti" style="left:1094px;top:811.3px">RIGHT LEG</div>
<div class="a" style="left:1361px;top:810.2px;font-size:14px;color:#b9c3c4">i</div>
<div class="hp" style="left:1091.6px;top:836.2px;color:#e8543a">80/80</div>
<div class="bar rd" style="left:1172px;top:833.7px;width:203px;height:19.2px"></div>
<div class="hp" style="left:1091.6px;top:869.2px;color:#eef6f7">10/10</div>
<div class="bar cy" style="left:1172px;top:866.4px;width:151px"></div>
<div class="sh" style="left:1331.1px;top:866.9px;width:21px;height:19.5px"></div>
<div class="a" style="left:1328.1px;top:863.9px;width:20.2px;height:18.5px;background:#d2f4fa;color:#1d2f35;font-size:12px;font-weight:bold;text-align:center;line-height:22px;overflow:hidden">-</div>
<div class="sh" style="left:1356.7px;top:866.9px;width:21px;height:19.5px"></div>
<div class="a" style="left:1353.7px;top:863.9px;width:20.2px;height:18.5px;background:#d2f4fa;color:#1d2f35;font-size:12px;font-weight:bold;text-align:center;line-height:22px;overflow:hidden">+</div>
<div class="e " style="left:1190.6px;top:912.7px"></div>
<div class="it g" style="left:1251.8px;top:905.9px;width:30.9px;height:64.9px"><span>JJ</span></div>
<div class="e " style="left:1190.6px;top:946.7px"></div>
<div class="e " style="left:1224.6px;top:946.7px"></div>
<div class="e " style="left:1190.6px;top:980.7px"></div>
<div class="e " style="left:1224.6px;top:980.7px"></div>
<div class="e " style="left:1258.6px;top:980.7px"></div>
<div class="e " style="left:1190.6px;top:1014.7px"></div>
<div class="e " style="left:1258.6px;top:1014.7px"></div>
<div class="pn" style="left:1512px;top:53px;width:400px;height:400px"></div>
<div class="hd" style="left:1512px;top:53px;width:400px;padding-left:5px">ACTIONS</div>
<div class="sh" style="left:1527.5px;top:94.5px;width:82.6px;height:23.1px"></div>
<div class="btn" style="left:1525px;top:91.5px;width:82px;height:22.5px;line-height:22.5px;">REPAIR ALL</div>
<div class="sh" style="left:1621.2px;top:94.5px;width:76.3px;height:23.1px"></div>
<div class="btn" style="left:1618.7px;top:91.5px;width:75.7px;height:22.5px;line-height:22.5px;">MAX ARMOR</div>
<div class="sh" style="left:1708.7px;top:94.5px;width:88.2px;height:23.1px"></div>
<div class="btn" style="left:1706.2px;top:91.5px;width:87.6px;height:22.5px;line-height:22.5px;">STRIP ARMOR</div>
<div class="sh" style="left:1808.5px;top:94.5px;width:88.6px;height:23.1px;border-color:#ee5327"></div>
<div class="btn red" style="left:1806px;top:91.5px;width:88px;height:22.5px;line-height:22.5px;">STRIP COMPS</div>
<div class="sh" style="left:1527.5px;top:136.1px;width:110.8px;height:22.6px"></div>
<div class="btn" style="left:1525px;top:133.1px;width:110.2px;height:22px;line-height:22px;">LAUNCH SIMPOD</div>
<div class="a" style="left:1524.5px;top:183.3px;font-size:16px;letter-spacing:1px;color:#f2fbfc">$17,000</div>
<div class="a" style="left:1822px;top:184px;font-size:13px;letter-spacing:.3px;color:#e8f2f3">14 DAY(S)</div>
<div class="a" style="left:1515px;top:214.4px;width:375px;height:166px;overflow:hidden">
<div class="a gn" style="left:8px;top:-3.8px;font-size:13px;font-weight:bold">+</div>
<div class="a gn" style="left:26.5px;top:-2.8px;font-size:11px">CT @ 5,0</div>
<div class="st" style="left:93.5px;top:-3.8px;color:#eef6f7">Heat Sink Medium</div>
<div class="st" style="left:241.5px;top:-3.8px;color:#eef6f7">$1K</div>
<div class="st" style="left:290.5px;top:-3.8px;color:#eef6f7">1</div>
<svg class="a" style="left:315.5px;top:-3.8px" width="11" height="11"><path d="M5.5 0L11 11H0z" fill="#e8f6f8"/></svg>
<svg class="a" style="left:343.5px;top:-4.8px" width="11" height="11"><path d="M0 0H11L5.5 11z" fill="#e8f6f8"/></svg>
<div class="a" style="left:6px;top:19px;width:357px;height:1.5px;background:#5f686a"></div>
<div class="a gn" style="left:8px;top:31.5px;font-size:13px;font-weight:bold">+</div>
<div class="a gn" style="left:26.5px;top:32.5px;font-size:11px">CT @ 0,0</div>
<div class="st" style="left:93.5px;top:31.5px;color:#eef6f7">Heat Sink Medium</div>
<div class="st" style="left:241.5px;top:31.5px;color:#eef6f7">$1K</div>
<div class="st" style="left:290.5px;top:31.5px;color:#eef6f7">1</div>
<svg class="a" style="left:315.5px;top:31.5px" width="11" height="11"><path d="M5.5 0L11 11H0z" fill="#e8f6f8"/></svg>
<svg class="a" style="left:343.5px;top:30.5px" width="11" height="11"><path d="M0 0H11L5.5 11z" fill="#e8f6f8"/></svg>
<div class="a" style="left:6px;top:54.3px;width:357px;height:1.5px;background:#5f686a"></div>
<div class="a gn" style="left:8px;top:66.8px;font-size:13px;font-weight:bold">+</div>
<div class="a gn" style="left:26.5px;top:67.8px;font-size:11px">LA @ 2,3</div>
<div class="st" style="left:93.5px;top:66.8px;color:#eef6f7">Heat Sink Large</div>
<div class="st" style="left:241.5px;top:66.8px;color:#eef6f7">$1K</div>
<div class="st" style="left:290.5px;top:66.8px;color:#eef6f7">1</div>
<svg class="a" style="left:315.5px;top:66.8px" width="11" height="11"><path d="M5.5 0L11 11H0z" fill="#e8f6f8"/></svg>
<svg class="a" style="left:343.5px;top:65.8px" width="11" height="11"><path d="M0 0H11L5.5 11z" fill="#e8f6f8"/></svg>
<div class="a" style="left:6px;top:89.6px;width:357px;height:1.5px;background:#5f686a"></div>
<div class="a gn" style="left:8px;top:102.1px;font-size:13px;font-weight:bold">+</div>
<div class="a gn" style="left:26.5px;top:103.1px;font-size:11px">LL @ 1,1</div>
<div class="st" style="left:93.5px;top:102.1px;color:#eef6f7">Heat Sink Medium</div>
<div class="st" style="left:241.5px;top:102.1px;color:#eef6f7">$1K</div>
<div class="st" style="left:290.5px;top:102.1px;color:#eef6f7">1</div>
<svg class="a" style="left:315.5px;top:102.1px" width="11" height="11"><path d="M5.5 0L11 11H0z" fill="#e8f6f8"/></svg>
<svg class="a" style="left:343.5px;top:101.1px" width="11" height="11"><path d="M0 0H11L5.5 11z" fill="#e8f6f8"/></svg>
<div class="a" style="left:6px;top:124.9px;width:357px;height:1.5px;background:#5f686a"></div>
<div class="a" style="left:7px;top:138.4px;font-size:11px;color:#e8543a">F-3</div>
<div class="st" style="left:93.5px;top:137.4px;color:#eef6f7">LA Armor</div>
<div class="st" style="left:241.5px;top:137.4px;color:#eef6f7">$1K</div>
<div class="st" style="left:290.5px;top:137.4px;color:#eef6f7">1</div>
<svg class="a" style="left:315.5px;top:137.4px" width="11" height="11"><path d="M5.5 0L11 11H0z" fill="#e8f6f8"/></svg>
<div class="a" style="left:6px;top:160.2px;width:357px;height:1.5px;background:#5f686a"></div>
</div>
<div class="a cy" style="left:1894px;top:320px;width:12px;height:47px"></div>
<div class="sh" style="left:1528.3px;top:405.5px;width:65.6px;height:26.6px"></div>
<div class="btn" style="left:1525px;top:401.7px;width:65px;height:26px;line-height:26px;font-size:14px;letter-spacing:1px;color:#2a3c42">RESET</div>
<div class="sh" style="left:1823.5px;top:405.5px;width:74.4px;height:26.6px"></div>
<div class="btn" style="left:1820.2px;top:401.7px;width:73.8px;height:26px;line-height:26px;font-size:14px;letter-spacing:1px;color:#2a3c42">COMMIT</div>
<div class="pn" style="left:1512px;top:461px;width:400px;height:295px"></div>
<div class="pn" style="left:1512px;top:764px;width:400px;height:299px"></div>
<div class="hd" style="left:1512px;top:763.5px;width:400px;padding-left:4px">WEAPON GROUPS</div>
<div class="a" style="left:1523.5px;top:809.9px;font-size:11px;color:#8f9a9b">LA</div>
<div class="st" style="left:1548px;top:808.9px">MED. LASER</div>
<div class="cb" style="left:1741.2px;top:807.1px"></div>
<div class="cb on" style="left:1764.6px;top:807.1px"></div>
<div class="cb" style="left:1788px;top:807.1px"></div>
<div class="cb" style="left:1811.4px;top:807.1px"></div>
<div class="cb" style="left:1834.8px;top:807.1px"></div>
<div class="cb" style="left:1858.2px;top:807.1px"></div>
<div class="a" style="left:1523.5px;top:840.7px;font-size:11px;color:#8f9a9b">RA</div>
<div class="st" style="left:1548px;top:839.7px">AC2V</div>
<div class="cb on" style="left:1741.2px;top:837.9px"></div>
<div class="cb" style="left:1764.6px;top:837.9px"></div>
<div class="cb" style="left:1788px;top:837.9px"></div>
<div class="cb" style="left:1811.4px;top:837.9px"></div>
<div class="cb" style="left:1834.8px;top:837.9px"></div>
<div class="cb" style="left:1858.2px;top:837.9px"></div>
<div class="a" style="left:1523.5px;top:871.5px;font-size:11px;color:#8f9a9b">RA</div>
<div class="st" style="left:1548px;top:870.5px">AC2V</div>
<div class="cb on" style="left:1741.2px;top:868.7px"></div>
<div class="cb" style="left:1764.6px;top:868.7px"></div>
<div class="cb" style="left:1788px;top:868.7px"></div>
<div class="cb" style="left:1811.4px;top:868.7px"></div>
<div class="cb" style="left:1834.8px;top:868.7px"></div>
<div class="cb" style="left:1858.2px;top:868.7px"></div>
<div class="a" style="left:1523.5px;top:902.3px;font-size:11px;color:#8f9a9b">LT</div>
<div class="st" style="left:1548px;top:901.3px">LRM1</div>
<div class="cb" style="left:1741.2px;top:899.5px"></div>
<div class="cb" style="left:1764.6px;top:899.5px"></div>
<div class="cb on" style="left:1788px;top:899.5px"></div>
<div class="cb" style="left:1811.4px;top:899.5px"></div>
<div class="cb" style="left:1834.8px;top:899.5px"></div>
<div class="cb" style="left:1858.2px;top:899.5px"></div>
<div class="a" style="left:1523.5px;top:933.1px;font-size:11px;color:#8f9a9b">LT</div>
<div class="st" style="left:1548px;top:932.1px">LRM1</div>
<div class="cb" style="left:1741.2px;top:930.3px"></div>
<div class="cb" style="left:1764.6px;top:930.3px"></div>
<div class="cb on" style="left:1788px;top:930.3px"></div>
<div class="cb" style="left:1811.4px;top:930.3px"></div>
<div class="cb" style="left:1834.8px;top:930.3px"></div>
<div class="cb" style="left:1858.2px;top:930.3px"></div>
<div class="a" style="left:1523.5px;top:963.9px;font-size:11px;color:#8f9a9b">LT</div>
<div class="st" style="left:1548px;top:962.9px">LRM1</div>
<div class="cb" style="left:1741.2px;top:961.1px"></div>
<div class="cb" style="left:1764.6px;top:961.1px"></div>
<div class="cb on" style="left:1788px;top:961.1px"></div>
<div class="cb" style="left:1811.4px;top:961.1px"></div>
<div class="cb" style="left:1834.8px;top:961.1px"></div>
<div class="cb" style="left:1858.2px;top:961.1px"></div>
<div class="a" style="left:1523.5px;top:994.7px;font-size:11px;color:#8f9a9b">LT</div>
<div class="st" style="left:1548px;top:993.7px">LRM1</div>
<div class="cb" style="left:1741.2px;top:991.9px"></div>
<div class="cb" style="left:1764.6px;top:991.9px"></div>
<div class="cb on" style="left:1788px;top:991.9px"></div>
<div class="cb" style="left:1811.4px;top:991.9px"></div>
<div class="cb" style="left:1834.8px;top:991.9px"></div>
<div class="cb" style="left:1858.2px;top:991.9px"></div>
<div class="a" style="left:1523.5px;top:1025.5px;font-size:11px;color:#8f9a9b">LT</div>
<div class="st" style="left:1548px;top:1024.5px">LRM1</div>
<div class="cb" style="left:1741.2px;top:1022.7px"></div>
<div class="cb" style="left:1764.6px;top:1022.7px"></div>
<div class="cb on" style="left:1788px;top:1022.7px"></div>
<div class="cb" style="left:1811.4px;top:1022.7px"></div>
<div class="cb" style="left:1834.8px;top:1022.7px"></div>
<div class="cb" style="left:1858.2px;top:1022.7px"></div>
<div class="a cy" style="left:1894px;top:807px;width:9px;height:188px"></div>
</body></html>
